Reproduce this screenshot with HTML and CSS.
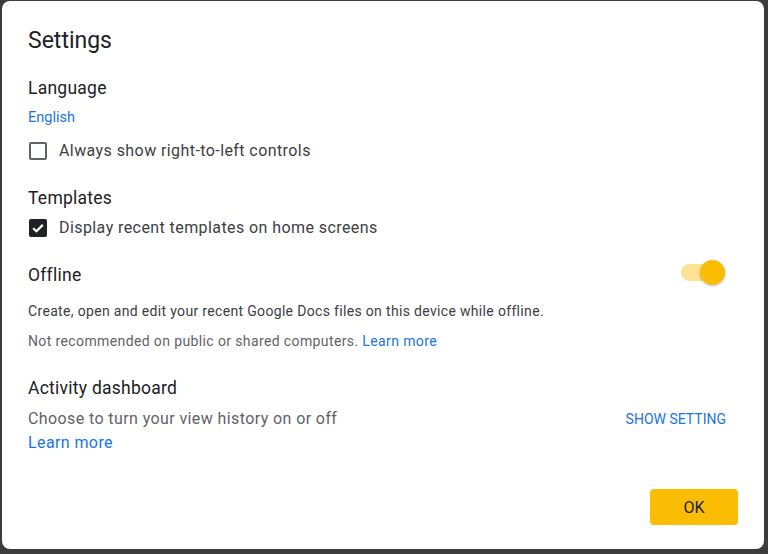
FILE: index.html
```html
<!DOCTYPE html>
<html>
<head>
<meta charset="utf-8">
<link rel="stylesheet" href="styles.css">
</head>
<body>
<div class="dialog">
  <h1 class="title">Settings</h1>

  <h2 class="heading heading-lang">Language</h2>
  <a class="link-sm lang">English</a>
  <label class="check-row row-rtl">
    <span class="box"></span>
    <span class="check-label">Always show right-to-left controls</span>
  </label>

  <h2 class="heading heading-tpl">Templates</h2>
  <label class="check-row row-tpl">
    <span class="box checked">
      <svg viewBox="0 0 18 18" width="18" height="18"><path d="M4.2 9.2 L7.4 12.3 L13.8 5.9" fill="none" stroke="#fff" stroke-width="2.2"/></svg>
    </span>
    <span class="check-label">Display recent templates on home screens</span>
  </label>

  <div class="offline-row">
    <h2 class="heading">Offline</h2>
    <span class="toggle"><span class="track"></span><span class="knob"></span></span>
  </div>
  <p class="desc">Create, open and edit your recent Google Docs files on this device while offline.</p>
  <p class="note">Not recommended on public or shared computers. <a class="link-inline">Learn more</a></p>

  <h2 class="heading heading-act">Activity dashboard</h2>
  <div class="activity-row">
    <span class="choose">Choose to turn your view history on or off</span>
    <a class="show-setting">SHOW SETTING</a>
  </div>
  <a class="learn-more">Learn more</a>

  <div class="actions">
    <button class="ok">OK</button>
  </div>
</div>
</body>
</html>
```

FILE: styles.css
```css
html, body {
  margin: 0;
  padding: 0;
}
body {
  background: #3c3c3c;
  width: 768px;
  height: 554px;
  overflow: hidden;
  font-family: Roboto, "Noto Sans", Arial, sans-serif;
  color: #202124;
}
.dialog {
  box-sizing: border-box;
  margin: 1px 4px 0 2px;
  height: 548px;
  background: #fff;
  border-radius: 8px;
  padding: 26px 26px 0 26px;
  display: flex;
  flex-direction: column;
  align-items: flex-start;
}
.title {
  margin: 0;
  font-size: 23px;
  font-weight: 400;
  line-height: 28px;
}
.heading {
  margin: 0;
  font-size: 17.5px;
  font-weight: 400;
  line-height: 24px;
  letter-spacing: 0.25px;
}
.heading-lang { margin-top: 21px; }
.lang {
  margin-top: 8px;
  font-size: 14.5px;
  line-height: 20px;
  letter-spacing: 0;
  color: #1a73e8;
}
.check-row {
  display: flex;
  align-items: center;
  height: 24px;
  gap: 12px;
  padding-left: 1px;
}
.row-rtl { margin-top: 11px; }
.heading-tpl { margin-top: 23px; }
.row-tpl { margin-top: 6px; }
.box {
  box-sizing: border-box;
  width: 18px;
  height: 18px;
  border: 2px solid #5f6368;
  border-radius: 2px;
  display: flex;
  align-items: center;
  justify-content: center;
}
.box.checked {
  background: #202124;
  border-color: #202124;
}
.box svg { display: block; flex: none; }
.check-label {
  font-size: 16px;
  line-height: 24px;
  letter-spacing: 0.42px;
  color: #3c4043;
}
.offline-row {
  margin-top: 23px;
  align-self: stretch;
  display: flex;
  align-items: center;
  justify-content: space-between;
  padding-right: 13px;
}
.toggle {
  position: relative;
  width: 44px;
  height: 25px;
  margin-top: -5px;
}
.track {
  position: absolute;
  left: 0;
  top: 4px;
  width: 36px;
  height: 17px;
  border-radius: 9px;
  background: #fde293;
}
.knob {
  position: absolute;
  right: 0;
  top: 0;
  width: 25px;
  height: 25px;
  border-radius: 50%;
  background: #fbbc04;
  box-shadow: 0 1px 3px rgba(0,0,0,0.25);
}
.desc {
  margin: 14px 0 0;
  font-size: 14px;
  line-height: 20px;
  letter-spacing: 0.33px;
  color: #3c4043;
}
.note {
  margin: 10px 0 0;
  font-size: 14px;
  line-height: 20px;
  letter-spacing: 0.38px;
  color: #5f6368;
}
.link-inline { color: #1a73e8; }
.heading-act { margin-top: 25px; }
.activity-row {
  margin-top: 7px;
  align-self: stretch;
  display: flex;
  align-items: center;
  justify-content: space-between;
  padding-right: 12px;
}
.choose {
  font-size: 16px;
  line-height: 24px;
  letter-spacing: 0.4px;
  color: #5f6368;
}
.show-setting {
  font-size: 14px;
  font-weight: 400;
  letter-spacing: 0;
  color: #1a73e8;
}
.learn-more {
  font-size: 16px;
  line-height: 24px;
  letter-spacing: 0.4px;
  color: #1a73e8;
}
.actions {
  align-self: stretch;
  display: flex;
  justify-content: flex-end;
  margin-top: 34px;
}
.ok {
  width: 88px;
  height: 36px;
  border: none;
  border-radius: 4px;
  background: #fbbc04;
  color: #202124;
  font-family: Roboto, "Noto Sans", Arial, sans-serif;
  font-size: 16px;
  font-weight: 400;
  padding: 0;
}
```
